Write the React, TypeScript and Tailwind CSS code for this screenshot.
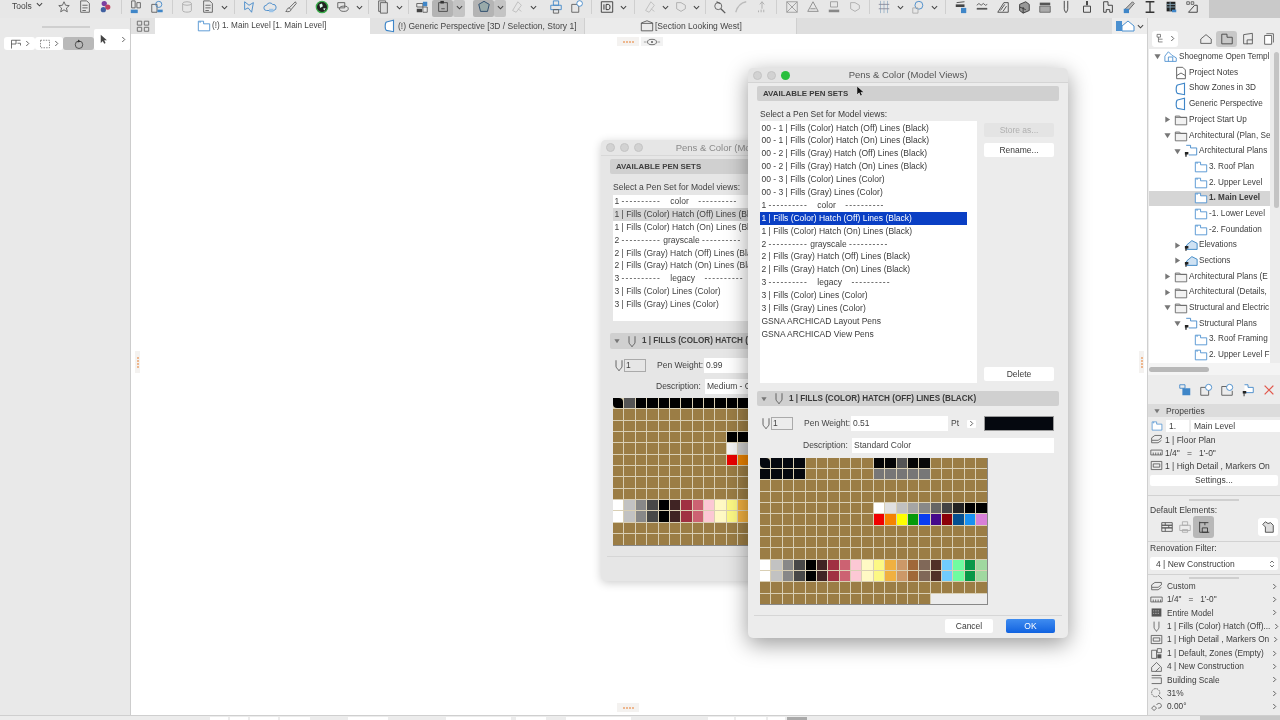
import React from "react";

const S = "#5a5a5a";
const B = "#3f86c8";

const paths: Record<string, React.ReactNode> = {
  star: <path d="M8 2l1.800 4 4.200.4-3.200 2.800 1 4.300L8 11.200l-3.800 2.300 1-4.300L2 6.400 6.200 6z" fill="none" stroke={S} />,
  doc: <><path d="M3 1h7l3 3v10H3z" fill="none" stroke={S} /><path d="M5 6h6M5 9h6M5 12h4" stroke={S} /></>,
  multi: <><circle cx="6" cy="4" r="3" fill="#7b3fa0" /><circle cx="10" cy="8" r="3" fill="#c04060" /><circle cx="5" cy="11" r="3" fill="#4060a0" /></>,
  layers: <><path d="M3 1h4v8H3zM9 3h4v6H9z" fill="none" stroke={S} /><path d="M2 11h8v4H2z" fill={B} /></>,
  plus: <><path d="M2 5h6v9H2z" fill="none" stroke={S} /><circle cx="10" cy="5" r="3.500" fill="none" stroke={B} /><path d="M8.500 11h6v3h-6z" fill={B} /></>,
  cyl: <><ellipse cx="8" cy="4" rx="5" ry="2" fill="none" stroke="#aaa" /><path d="M3 4v8c0 2.500 10 2.500 10 0V4" fill="none" stroke="#aaa" /></>,
  wand: <><path d="M3 2l5 4 5-3-2 11-4-5-4 2z" fill="none" stroke={B} /></>,
  cloud: <><path d="M4 12a3 3 0 010-6 4 4 0 017-1 3.500 3.500 0 011 7z" fill="none" stroke={B} /><path d="M7 10h5v4H7z" fill="#9cc4e8" /></>,
  brush: <><path d="M13 2L6 9l2 2 6-7zM6 9c-3 0-2 3-4 4 3 1 6 0 6-2" fill="none" stroke={S} /></>,
  globe: <><circle cx="8" cy="8" r="6.500" fill="#222" stroke="#3cae4c" strokeWidth="1.500" /><path d="M5 5l3-1 1 3-3 2zM9 10l3-1-1 3z" fill="#dfe" /></>,
  chain: <><path d="M2 3h8v6H2z" fill="none" stroke={S} /><ellipse cx="9" cy="10" rx="5" ry="3" fill="none" stroke={S} /></>,
  pages: <><path d="M3 1h8v12H3z" fill="#e8e8e8" stroke={S} /><path d="M5 3h8v12H5z" fill="#ddd" stroke={S} /></>,
  iso: <><path d="M2 4h7v4H2zM9 8h5v6H9z" fill="none" stroke={S} /><path d="M9 2h5v5H9z" fill={B} /><path d="M2 10h6v4H2z" fill="#444" /></>,
  sq: <><path d="M3 3h10v10H3z" fill="none" stroke="#444" /><path d="M5 1h4v3H5z" fill="#333" /><path d="M6 10h4" stroke="#444" /></>,
  hexa: <path d="M8 1.500l6 3.500-2 8H4L2 5z" fill="#9aa" stroke="#246" strokeWidth="1" />,
  ghost: <path d="M3 12l6-10 4 4-6 8zM9 10l4 3" fill="none" stroke="#bbb" />,
  printer: <><path d="M5 1h6v5H5zM2 6h12v5H2z" fill="none" stroke={B} /><path d="M5 11h6v4H5z" fill="none" stroke={S} /></>,
  addpage: <><path d="M2 5h8v9H2z" fill="none" stroke={S} /><circle cx="11" cy="4" r="3.200" fill="#fff" stroke={B} /></>,
  id: <><path d="M1.500 2h13v12h-13z" fill="none" stroke="#333" /><path d="M4.500 5v6M7 5v6h2.500a2 3 0 000-6z" fill="none" stroke="#222" /></>,
  pickup: <><circle cx="6" cy="7" r="4" fill="none" stroke={S} /><path d="M9 10l5 5M4 2l4 2" stroke={S} strokeWidth="1.500" /></>,
  curve: <path d="M2 14C4 7 8 3 14 2" fill="none" stroke="#bbb" strokeWidth="1.500" />,
  arrowup: <><path d="M8 2v8M5.500 5L8 2l2.500 3" fill="none" stroke="#aaa" /><path d="M4 14v-2M7 14v-3M10 14v-3" stroke="#aaa" /></>,
  cross: <><path d="M2 2h12v12H2zM2 2l12 12M14 2L2 14" fill="none" stroke="#999" /></>,
  tri: <path d="M8 2l6 11H2zM5 10h6" fill="none" stroke="#888" />,
  roll: <><path d="M4 2h8v6H4z" fill="none" stroke="#999" /><path d="M2 11h12v3H2z" fill="#888" /></>,
  shape: <path d="M3 3h5l5 3v4l-5 3-5-3z" fill="none" stroke="#aaa" />,
  column: <><path d="M4 1v14M8 1v14M12 1v14" stroke="#9cb4c8" /><path d="M2 5h12M2 10h12" stroke="#889" /></>,
  circleplus: <><circle cx="9" cy="6" r="4.500" fill="none" stroke={B} /><path d="M2 9h6v6H2z" fill="none" stroke="#aaa" /></>,
  roof: <><path d="M2 5h10v3H2z" fill="#444" /><path d="M3 3l9-1" stroke="#444" /><path d="M8 9h6v6H8z" fill={B} /></>,
  wave: <><path d="M2 6l2.500-2L7 6l2.500-2L12 6l2-1" fill="none" stroke="#555" /><path d="M2 10h12" stroke="#555" strokeWidth="2" /></>,
  hatch: <path d="M2 14L9 3h5v11zM5 12l5-7M8 13l4-6" fill="none" stroke="#444" />,
  cube: <><path d="M3 5l7-3 4 3v7l-7 3-4-3z" fill="#999" stroke="#333" /><path d="M3 8l7 3M7 8v7" stroke="#333" /></>,
  slab: <><path d="M2 3h12v3H2z" fill="#555" /><path d="M2 7h12v7H2z" fill="#aaa" stroke="#666" /></>,
  pen: <path d="M6 1v9c0 1.500 1 3.500 2 4.500 1-1 2-3 2-4.500V1" fill="none" stroke="#333" />,
  bottle: <><path d="M7 1h2v5H7z" fill="#333" /><path d="M4 7h8v7H4z" fill="none" stroke="#333" /></>,
  plan2: <path d="M3 2h5v4h5v8h-3v-3H6v3H3z" fill="none" stroke="#333" />,
  brushB: <><path d="M4 10l8-8 2 2-7 8z" fill="#bbb" stroke={S} /><path d="M2 10h6v5H2z" fill={B} /></>,
  ibeam: <path d="M3 2h10M3 14h10M8 2v12" fill="none" stroke="#333" strokeWidth="1.500" />,
  book: <><path d="M3 2h10v11H3z" fill="#222" /><path d="M3 5h10M3 8h10M7 2v11" stroke="#8ab" /><path d="M9 11h5v3H9z" fill={B} /></>,
  tool: <><path d="M2 2h3v3H2zM7 2h3v3H7z" fill="none" stroke={S} /><path d="M4 14L11 6h3v8z" fill="none" stroke="#333" /></>,
};

const Ic = ({ n, className = "w-[14px] h-[14px]" }: { n: string; className?: string }) => (
  <svg viewBox="0 0 16 16" className={className}>{paths[n]}</svg>
);

const Chev = () => (
  <svg viewBox="0 0 8 8" className="w-[7px] h-[7px]"><path d="M1 2.500l3 3 3-3" fill="none" stroke="#444" strokeWidth="1.200" /></svg>
);

type T = [string, string, string?];
const I = "w-[21px]";
const C = "w-[12px]";
const tb: T[] = [
  ["star", I], ["doc", I], ["multi", I], ["|", "w-[9px]"],
  ["layers", I], ["plus", I], ["|", "w-[9px]"],
  ["cyl", I], ["doc", I], ["v", C], ["|", "w-[7.500px]"],
  ["wand", I], ["cloud", I], ["brush", I], ["|", "w-[10px]"],
  ["globe", I], ["chain", I], ["v", C], ["|", "w-[7px]"],
  ["pages", I], ["v", C], ["|", "w-[6px]"],
  ["iso", I], ["sq", I, "bg-[#b4b4b4] rounded-[2px]"], ["v", C, "bg-[#c4c4c4] rounded-[2px]"], [" ", "w-[8px]"],
  ["hexa", I, "bg-[#b4b4b4] rounded-[2px]"], ["v", C, "bg-[#c4c4c4] rounded-[2px]"],
  ["ghost", I], ["v", C], [" ", "w-[6px]"],
  ["printer", I], ["addpage", I], ["|", "w-[9px]"],
  ["id", I], ["v", C], ["|", "w-[10px]"],
  ["ghost", I], ["v", "w-[10px]"], ["shape", I], ["v", "w-[10px]"], ["|", "w-[8px]"],
  ["pickup", I], ["curve", I], ["arrowup", I], ["|", "w-[9px]"],
  ["cross", I], ["tri", I], ["roll", I], ["shape", I], ["|", "w-[8px]"],
  ["column", I], ["v", C], [" ", "w-[1px]"], ["circleplus", I], ["v", C], ["|", "w-[10px]"],
  ["roof", I], ["wave", I], ["hatch", I], ["cube", I], ["slab", I], ["pen", I], ["bottle", I], ["plan2", I], ["brushB", I], ["ibeam", I], ["book", I], ["tool", I],
];

const Toolbar = () => (
  <div className="h-[18px] bg-[#e7e7e7] flex overflow-hidden shrink-0">
    <div className="w-[53.500px] flex items-start gap-[4px] pl-[12px] pt-[1px] text-[8.500px] text-[#444] leading-[10px]">Tools <Chev /></div>
    {tb.map(([n, w, extra], i) => (
      <div key={i} className={`${w} ${extra ?? ""} h-[17px] flex items-center justify-center shrink-0 pb-[3px]`}>
        {n === "|" ? <div className="w-px h-[14px] bg-[#cfcfcf]" /> : n === " " ? null : n === "v" ? <Chev /> : <Ic n={n} />}
      </div>
    ))}
    <div className="flex-1 ml-[7px] bg-[#c9c9c9]" />
  </div>
);

const PlanIc = ({ className = "w-[14px] h-[14px]" }: { className?: string }) => (
  <svg viewBox="0 0 16 16" className={className}><path d="M1.500 2.500v11h13V5.500H7.500v-3z" fill="#fff" stroke="#4b90d0" /><path d="M3.500 2.500v2" stroke="#4b90d0" /></svg>
);
const PerspIc = ({ className = "w-[14px] h-[14px]" }: { className?: string }) => (
  <svg viewBox="0 0 16 16" className={className}><path d="M4 3.500l8-2v13l-8-1.500c-2-1-2-8.500 0-9.500z" fill="#fff" stroke="#3f86c8" strokeWidth="1.300" /></svg>
);
const SectIc = ({ className = "w-[14px] h-[14px]" }: { className?: string }) => (
  <svg viewBox="0 0 16 16" className={className}><path d="M1.500 13.500v-9L8 2l6.500 2.500v9z" fill="none" stroke="#555" /><path d="M1.500 5h13" stroke="#555" /></svg>
);
const Folder = () => (
  <svg viewBox="0 0 16 16" className="w-[14px] h-[14px]"><path d="M1.500 3.500h5l1 1.500h7v8.500h-13z" fill="#f2f2f2" stroke="#666" /><path d="M1.500 5h13" stroke="#666" /></svg>
);
const Note = () => (
  <svg viewBox="0 0 16 16" className="w-[14px] h-[14px]"><path d="M3 1.500h7l3 3v10H3z" fill="#fff" stroke="#555" /><path d="M3 11l5-3 5 3" fill="none" stroke="#555" /></svg>
);
const Pinned = ({ round }: { round?: boolean }) => (
  <svg viewBox="0 0 16 16" className="w-[14px] h-[14px]">
    {round ? <path d="M3 8l6-5 6 3v7H3z" fill="#cfe2f3" stroke="#2f7fc0" /> : <path d="M2.500 1.500h5v3h7v8h-9" fill="#fff" stroke="#3f86c8" />}
    <path d="M1 9h4v3H3v2.500H1.500V12H1z" fill="#222" />
  </svg>
);
const SectRoot = () => (
  <svg viewBox="0 0 16 16" className="w-[14px] h-[14px]"><path d="M1 13V7l4-5 4 4 5 3v4z" fill="#fff" stroke="#4b90d0" /><path d="M5 13V8h5v5" fill="none" stroke="#4b90d0" /></svg>
);

type Row = { l: number; t?: "r" | "d"; i: string; x: string; sel?: boolean };
const rows: Row[] = [
  { l: 0, t: "d", i: "root", x: "Shoegnome Open Templ" },
  { l: 1, i: "note", x: "Project Notes" },
  { l: 1, i: "persp", x: "Show Zones in 3D" },
  { l: 1, i: "persp", x: "Generic Perspective" },
  { l: 1, t: "r", i: "folder", x: "Project Start Up" },
  { l: 1, t: "d", i: "folder", x: "Architectural (Plan, Se" },
  { l: 2, t: "d", i: "pin", x: "Architectural Plans" },
  { l: 3, i: "plan", x: "3. Roof Plan" },
  { l: 3, i: "plan", x: "2. Upper Level" },
  { l: 3, i: "plan", x: "1. Main Level", sel: true },
  { l: 3, i: "plan", x: "-1. Lower Level" },
  { l: 3, i: "plan", x: "-2. Foundation" },
  { l: 2, t: "r", i: "pinr", x: "Elevations" },
  { l: 2, t: "r", i: "pinr", x: "Sections" },
  { l: 1, t: "r", i: "folder", x: "Architectural Plans (E" },
  { l: 1, t: "r", i: "folder", x: "Architectural (Details," },
  { l: 1, t: "d", i: "folder", x: "Structural and Electric" },
  { l: 2, t: "d", i: "pin", x: "Structural Plans" },
  { l: 3, i: "plan", x: "3. Roof Framing" },
  { l: 3, i: "plan", x: "2. Upper Level F" },
];

const Tri = ({ d, className = "w-[7px] h-[7px]" }: { d: "r" | "d"; className?: string }) => (
  <svg viewBox="0 0 8 8" className={className}>{d === "r" ? <path d="M1.500 0.500L7 4 1.500 7.500z" fill="#777" /> : <path d="M0.500 1.500h7L4 7z" fill="#777" />}</svg>
);

const pad = ["w-[12px]", "w-[22px]", "w-[32px]", "w-[42px]"];
const TreeRow = ({ r }: { r: Row }) => (
  <div className={`h-[15.700px] flex items-center relative whitespace-nowrap overflow-hidden ${r.sel ? "bg-[#d5d5d5] font-bold" : ""}`}>
    <div className={`${pad[r.l]} shrink-0 relative h-full`}>
      {r.t && <div className="absolute right-[0px] top-[4px]"><Tri d={r.t} /></div>}
    </div>
    <div className="w-[16px] shrink-0 pl-[1px] flex items-center ml-[2px]">
      {r.i === "root" ? <SectRoot /> : r.i === "note" ? <Note /> : r.i === "persp" ? <PerspIc /> : r.i === "folder" ? <Folder /> : r.i === "plan" ? <PlanIc /> : r.i === "pin" ? <Pinned /> : <Pinned round />}
    </div>
    <span>{r.x}</span>
  </div>
);

const propRows: [string, string][] = [
  ["floors", "Custom"], ["scale", '1/4"   =   1\'-0"'], ["model", "Entire Model"], ["pen", "1 | Fills (Color) Hatch (Off)..."],
  ["det", "1 | High Detail , Markers On"], ["zone", "1 | Default, Zones (Empty)"], ["reno", "4 | New Construction"], ["bld", "Building Scale"], ["zoom", "31%"], ["rot", "0.00°"],
];
const SmIc = ({ n }: { n: string }) => {
  const m: Record<string, React.ReactNode> = {
    floors: <><path d="M2 6l4-3h8v3l-4 3H2z" fill="none" stroke="#555" /><path d="M2 9v3h8l4-3" fill="none" stroke="#555" /></>,
    scale: <><path d="M1 5h14v6H1z" fill="none" stroke="#555" /><path d="M4 8v3M7 8v3M10 8v3M13 8v3" stroke="#555" /></>,
    model: <><path d="M2 3h12v10H2z" fill="#555" /><path d="M4 6h8M4 9h8" stroke="#ddd" strokeDasharray="1 1" /></>,
    pen: <path d="M5 2v7c0 2 2 3 3 5 1-2 3-3 3-5V2" fill="none" stroke="#555" />,
    det: <><path d="M1.500 3h13v10h-13z" fill="none" stroke="#555" /><path d="M4 6h8v4H4z" fill="none" stroke="#555" /></>,
    zone: <><path d="M2 4h6v10H2zM9 2h5v5H9z" fill="none" stroke="#555" /><path d="M9 9h5v5H9z" fill="#555" /></>,
    reno: <path d="M2 14V9l6-6 6 6v5zM7 14l5-5" fill="none" stroke="#555" />,
    bld: <><path d="M2 3h12M2 13h12M2 6h12v7" fill="none" stroke="#555" /></>,
    zoom: <><circle cx="7" cy="7" r="5" fill="none" stroke="#555" strokeDasharray="2 1" /><path d="M10.500 10.500L15 15" stroke="#555" /></>,
    rot: <path d="M2 10l3-3 3 3-3 3zM8 6c2-3 6-2 6 1s-3 3-4 3" fill="none" stroke="#555" />,
  };
  return <svg viewBox="0 0 16 16" className="w-[13px] h-[13px] shrink-0">{m[n]}</svg>;
};
const Gt = () => (
  <svg viewBox="0 0 6 8" className="w-[5px] h-[7px] shrink-0"><path d="M1.500 1l3 3-3 3" fill="none" stroke="#444" /></svg>
);

const RightPanel = () => (
  <div className="w-[133px] shrink-0 bg-[#ececec] border-l border-[#cfcfcf] flex flex-col text-[#3c3c3c] text-[8.500px] relative overflow-hidden [&>*]:shrink-0">
    <div className="h-[31.400px] relative flex items-center">
      <div className="w-[26px] h-[16px] ml-[4px] mt-[10px] bg-white rounded-[3px] flex items-center justify-center gap-[4px]">
        <svg viewBox="0 0 16 16" className="w-[11px] h-[11px]"><path d="M3 2h5v4H3zM5 6v7h6M5 9h6" fill="none" stroke="#555" /></svg><Gt />
      </div>
      <div className="flex items-center ml-[17px] mt-[10px]">
        <div className="w-[21px] h-[16px] flex items-center justify-center"><svg viewBox="0 0 16 16" className="w-[14px] h-[14px]"><path d="M2 13V8l6-5 6 5v5z" fill="none" stroke="#555" /></svg></div>
        <div className="w-[21px] h-[16px] flex items-center justify-center bg-[#c8c8c8] rounded-[3px]"><svg viewBox="0 0 16 16" className="w-[14px] h-[14px]"><path d="M2 2.500v11h12V6H8V2.500z" fill="none" stroke="#444" /></svg></div>
        <div className="w-[21px] h-[16px] flex items-center justify-center"><svg viewBox="0 0 16 16" className="w-[14px] h-[14px]"><path d="M3 3l10-1.500v12H3z" fill="none" stroke="#555" /><path d="M7 14V9h6" fill="none" stroke="#555" /></svg></div>
        <div className="w-[21px] h-[16px] flex items-center justify-center"><svg viewBox="0 0 16 16" className="w-[14px] h-[14px]"><path d="M5 2h8v10M3 4h8v10H3z" fill="#fff" stroke="#555" /></svg></div>
      </div>
    </div>
    <div className="h-[314px] bg-white overflow-hidden ml-[1px] mr-[10px] text-[8.200px]">
      {rows.map((r, i) => <TreeRow key={i} r={r} />)}
    </div>
    <div className="absolute right-[1px] top-[34px] w-[5px] h-[156px] rounded-full bg-[#c4c4c4]" />
    <div className="h-[12px] flex items-center px-[1px] bg-[#f4f4f4]"><div className="w-[60px] h-[5px] rounded-full bg-[#b8b8b8]" /></div>
    <div className="h-[29px] flex items-center justify-end gap-[7px] pr-[4px]">
      <svg viewBox="0 0 16 16" className="w-[14px] h-[14px]"><path d="M2 2h6v4H2z" fill="none" stroke={B} /><path d="M5 6h9v8H5z" fill={B} /></svg>
      <svg viewBox="0 0 16 16" className="w-[14px] h-[14px]"><path d="M2 5h9v9H2z" fill="none" stroke="#555" /><circle cx="11" cy="5" r="3.500" fill="#fff" stroke={B} /></svg>
      <svg viewBox="0 0 16 16" className="w-[14px] h-[14px]"><path d="M2 4h6M2 4v10h12V9" fill="none" stroke="#555" /><circle cx="11" cy="5" r="3.500" fill="#fff" stroke={B} /></svg>
      <svg viewBox="0 0 16 16" className="w-[14px] h-[14px]"><path d="M4 2h4v3h6v6H4" fill="#fff" stroke={B} /><path d="M2 9h4v3H4v3H3v-3H2z" fill="#222" /></svg>
      <svg viewBox="0 0 16 16" className="w-[14px] h-[14px]"><path d="M3 3l10 10M13 3L3 13" stroke="#e2584c" strokeWidth="1.500" /></svg>
    </div>
    <div className="h-[13px] bg-[#dcdcdc] flex items-center pl-[6px] gap-[6px]"><Tri d="d" className="w-[6px] h-[6px]" /><span>Properties</span></div>
    <div className="h-[15px] mt-[1px] flex items-center pl-[3px] gap-[1px]">
      <PlanIc className="w-[12px] h-[12px] mr-[2px]" />
      <div className="w-[23px] h-[12px] bg-white pl-[3px] leading-[12px]">1.</div>
      <div className="flex-1 h-[12px] bg-white pl-[3px] ml-[1px] leading-[12px]">Main Level</div>
    </div>
    {[["floors", "1 | Floor Plan"], ["scale", '1/4"   =   1\'-0"'], ["det", "1 | High Detail , Markers On"]].map(([n, t]) => (
      <div key={t} className="h-[13px] flex items-center pl-[2px] gap-[2px] whitespace-pre"><SmIc n={n} /><span>{t}</span></div>
    ))}
    <div className="h-[11px] mx-[2px] mt-[3px] bg-white rounded-[2px] text-center leading-[11px]">Settings...</div>
    <div className="h-px bg-[#d2d2d2] mt-[9px]" />
    <div className="h-[2px] w-[50px] bg-[#cfcfcf] self-center mt-[3px]" />
    <div className="h-[12px] pl-[2px] mt-[3px] leading-[12px]">Default Elements:</div>
    <div className="h-[22px] flex items-center pl-[8px]">
      <div className="w-[21px] flex justify-center"><svg viewBox="0 0 16 16" className="w-[14px] h-[14px]"><path d="M2 3h12v3H2zM2 6h12v3H2zM2 9h12v4H2zM6 3v3M10 6v3M6 9v4" fill="none" stroke="#555" /></svg></div>
      <div className="w-[16px] flex justify-center"><svg viewBox="0 0 16 16" className="w-[14px] h-[14px]"><path d="M5 2h6v4H5zM2 6h12v6H2zM5 11h6v3H5z" fill="none" stroke="#aaa" /></svg></div>
      <div className="w-[21px] h-[22px] bg-[#b8b8b8] rounded-[3px] flex items-center justify-center"><svg viewBox="0 0 16 16" className="w-[14px] h-[14px]"><path d="M3 2v12M3 3h10M3 14h11M9 3v3M6 9h6v5H6z" fill="none" stroke="#333" /></svg></div>
      <div className="w-[20px] h-[18px] ml-[44px] bg-white rounded-[3px] flex items-center justify-center"><svg viewBox="0 0 16 16" className="w-[14px] h-[14px]"><path d="M2 5l3-3 3 2 3-1 3 3v8H5V8z" fill="#ddd" stroke="#444" /></svg></div>
    </div>
    <div className="h-px bg-[#d2d2d2] mt-[3px]" />
    <div className="h-[12px] pl-[2px] leading-[12px]">Renovation Filter:</div>
    <div className="h-[13px] mx-[2px] mt-[3px] bg-white rounded-[2px] flex items-center justify-between pl-[6px] pr-[3px]"><span>4 | New Construction</span><svg viewBox="0 0 8 12" className="w-[6px] h-[10px]"><path d="M1.500 4.500L4 2l2.500 2.500M1.500 7.500L4 10l2.500-2.500" fill="none" stroke="#444" /></svg></div>
    <div className="h-px bg-[#d2d2d2] mt-[4px]" />
    <div className="h-[2px] w-[50px] bg-[#cfcfcf] self-center mt-[2px]" />
    <div className="text-[8.300px]">
      {propRows.map(([n, t]) => (
        <div key={n} className="h-[13.400px] flex items-center pl-[2px] pr-[3px] gap-[4px] whitespace-pre"><SmIc n={n} /><span className="flex-1">{t}</span><Gt /></div>
      ))}
    </div>
  </div>
);

const BROWN = "#9b7d45";
const base = (over: Record<number, string>, blank: number | null) => {
  const out: { c: string; span?: boolean }[] = [];
  for (let i = 0; i < 260; i++) {
    if (blank !== null && i === blank) { out.push({ c: "#ececec", span: true }); break; }
    out.push({ c: over[i] ?? BROWN });
  }
  return out;
};
const addRow = (o: Record<number, string>, row: number, start: number, cols: string[]) => cols.forEach((c, i) => { o[row * 20 + start + i] = c; });
const ramp = ["#ffffff", "#c2c2c2", "#888888", "#484848", "#000000", "#402424", "#a03042", "#cc6272", "#fcc8d4", "#fff9c4", "#fcf884", "#f0b040", "#cc9868", "#a06838", "#806858", "#503028", "#70ccfc", "#70fca0", "#089848", "#a0d8a0"];
const front: Record<number, string> = {};
addRow(front, 0, 0, ["#05080f", "#05080f", "#05080f", "#05080f"]);
addRow(front, 1, 0, ["#05080f", "#05080f", "#05080f", "#05080f"]);
addRow(front, 0, 10, ["#050505", "#050505", "#555555", "#050505", "#0a0a0a"]);
addRow(front, 1, 10, ["#777777", "#777777", "#777777", "#777777", "#777777"]);
addRow(front, 4, 10, ["#ffffff", "#e0e0e0", "#c0c0c0", "#a5a5a5", "#888888", "#666666", "#444444", "#222222", "#000000", "#000000"]);
addRow(front, 5, 10, ["#f00000", "#f58300", "#ffff00", "#069a0a", "#0a3cf0", "#460a8c", "#8c0008", "#054f90", "#1890f0", "#d880d8"]);
addRow(front, 9, 0, ramp);
addRow(front, 10, 0, ramp);
const back: Record<number, string> = {};
addRow(back, 0, 0, ["#000000", "#555555", ...Array(18).fill("#000000")]);
addRow(back, 3, 10, ["#000000", "#000000"]);
addRow(back, 4, 10, ["#f4f4f4", "#cccccc"]);
addRow(back, 5, 10, ["#e80000", "#e88000"]);
addRow(back, 9, 0, ramp);
addRow(back, 10, 0, ramp);

const Palette = ({ over, blank }: { over: Record<number, string>; blank: number | null }) => (
  <div className="w-[227.500px] h-[147.500px] bg-[#d9cfb4] grid grid-cols-[repeat(20,1fr)] grid-rows-[repeat(13,1fr)] gap-[1px] border-b border-r border-[#888] shrink-0">
    {base(over, blank).map((c, i) => (
      <div key={i} className={c.span ? "col-span-5" : i === 0 ? "rounded-tr-[4px] rounded-bl-[4px]" : ""} style={{ backgroundColor: c.c }} />
    ))}
  </div>
);

const Lights = ({ green }: { green?: boolean }) => (
  <div className="flex gap-[5px] items-center absolute left-[5px] top-[2px] h-[11px]">
    <div className="w-[9px] h-[9px] rounded-full bg-[#d2d2d2] border border-[#c4c4c4]" />
    <div className="w-[9px] h-[9px] rounded-full bg-[#d2d2d2] border border-[#c4c4c4]" />
    <div className={`w-[9px] h-[9px] rounded-full ${green ? "bg-[#2abf3e]" : "bg-[#d2d2d2] border border-[#c4c4c4]"}`} />
  </div>
);

const Fork = () => <svg viewBox="0 0 16 16" className="w-[12px] h-[13px] shrink-0"><path d="M4 1v8c0 2 2 3 4 6 2-3 4-4 4-6V1" fill="none" stroke="#555" strokeWidth="1.200" /></svg>;

const Dashed = ({ t }: { t: string }) => (
  <>{t.split(/(-{10})/).map((p, i) => (p.startsWith("-----") ? <span key={i} className="tracking-[1.100px]">{p}</span> : <span key={i}>{p}</span>))}</>
);

const frontList = ["00 - 1 | Fills (Color) Hatch (Off) Lines (Black)", "00 - 1 | Fills (Color) Hatch (On) Lines (Black)", "00 - 2 | Fills (Gray) Hatch (Off) Lines (Black)", "00 - 2 | Fills (Gray) Hatch (On) Lines (Black)", "00 - 3 | Fills (Color) Lines (Color)", "00 - 3 | Fills (Gray) Lines (Color)", "1 ----------    color    ----------", "1 | Fills (Color) Hatch (Off) Lines (Black)", "1 | Fills (Color) Hatch (On) Lines (Black)", "2 ---------- grayscale ----------", "2 | Fills (Gray) Hatch (Off) Lines (Black)", "2 | Fills (Gray) Hatch (On) Lines (Black)", "3 ----------    legacy    ----------", "3 | Fills (Color) Lines (Color)", "3 | Fills (Gray) Lines (Color)", "GSNA ARCHICAD Layout Pens", "GSNA ARCHICAD View Pens"];
const backList = ["1 ----------    color    ----------", "1 | Fills (Color) Hatch (Off) Lines (Black)", "1 | Fills (Color) Hatch (On) Lines (Black)", "2 ---------- grayscale ----------", "2 | Fills (Gray) Hatch (Off) Lines (Black)", "2 | Fills (Gray) Hatch (On) Lines (Black)", "3 ----------    legacy    ----------", "3 | Fills (Color) Lines (Color)", "3 | Fills (Gray) Lines (Color)"];

const FrontWindow = () => (
  <div className="absolute left-[748px] top-[68px] w-[320px] h-[570px] bg-[#ececec] rounded-[5px] shadow-[0_6px_22px_rgba(0,0,0,0.4)] flex flex-col text-[#3a3a3a] text-[8.500px] overflow-hidden">
    <div className="h-[15px] relative text-center text-[9.500px] text-[#555] leading-[14px] bg-[#e4e4e4] border-b border-[#d4d4d4]"><Lights green />Pens &amp; Color (Model Views)</div>
    <div className="h-[15px] mt-[3px] mx-[9px] bg-[#d0d0d0] rounded-[2px] pl-[6px] font-bold text-[7.900px] leading-[15px]">AVAILABLE PEN SETS</div>
    <div className="h-[10px] mt-[8px] ml-[12px] leading-[10px]">Select a Pen Set for Model views:</div>
    <div className="flex mt-[2px] ml-[12px] h-[262px]">
      <div className="w-[217px] bg-white pt-[0.500px]">
        {frontList.map((t, i) => (
          <div key={i} className={`h-[12.900px] w-[207px] leading-[12.900px] pl-[1.500px] whitespace-pre ${i === 7 ? "bg-[#0a3fc4] text-white" : ""}`}><Dashed t={t} /></div>
        ))}
      </div>
      <div className="flex flex-col ml-[7px] w-[70px] text-center">
        <div className="h-[14px] mt-[2px] bg-[#e4e4e4] text-[#b0b0b0] rounded-[2px] leading-[14px]">Store as...</div>
        <div className="h-[14px] mt-[6px] bg-white rounded-[2px] leading-[14px]">Rename...</div>
        <div className="h-[14px] mt-auto mb-[2px] bg-white rounded-[2px] leading-[14px]">Delete</div>
      </div>
    </div>
    <div className="h-[15px] mt-[8px] mx-[9px] bg-[#d0d0d0] rounded-[2px] pl-[4px] flex items-center gap-[6px] font-bold text-[8.150px] leading-[15px]"><Tri d="d" className="w-[6px] h-[6px]" /><Fork /><span className="ml-[-2px]">1 | FILLS (COLOR) HATCH (OFF) LINES (BLACK)</span></div>
    <div className="h-[15px] mt-[10px] flex items-center pl-[12px] text-[#444] whitespace-nowrap">
      <Fork />
      <div className="w-[22px] h-[13px] border border-[#aaa] ml-[-1px] pl-[1px] leading-[11px]">1</div>
      <span className="ml-[11px] w-[47px]">Pen Weight:</span>
      <div className="w-[97px] h-[15px] bg-white pl-[2px] leading-[15px]">0.51</div>
      <span className="ml-[3px] w-[13px]">Pt</span>
      <div className="w-[9px] h-[8px] ml-[3px] bg-white rounded-[1px] flex items-center justify-center"><Gt /></div>
      <div className="w-[70px] h-[15px] ml-[8px] bg-[#05080f] border border-[#9a9a9a]" />
    </div>
    <div className="h-[15px] mt-[7px] flex items-center pl-[55px] text-[#444] whitespace-nowrap">
      <span className="w-[49px]">Description:</span>
      <div className="w-[202px] h-[15px] bg-white pl-[2px] leading-[15px]">Standard Color</div>
    </div>
    <div className="ml-[12px] mt-[4.500px]"><Palette over={front} blank={255} /></div>
    <div className="h-px mx-[6px] mt-[10px] bg-[#d6d6d6]" />
    <div className="flex justify-end pr-[13px] mt-[3px] gap-[13px] text-center">
      <div className="w-[48px] h-[14px] bg-white rounded-[2px] leading-[14px]">Cancel</div>
      <div className="w-[49px] h-[14px] bg-gradient-to-b from-[#3f8cf0] to-[#0f62e0] text-white rounded-[2px] leading-[14px]">OK</div>
    </div>
  </div>
);

const BackWindow = () => (
  <div className="absolute left-[601px] top-[140px] w-[268px] h-[441px] bg-[#e6e6e6] rounded-[5px] shadow-[0_2px_10px_rgba(0,0,0,0.2)] flex flex-col text-[#3f3f3f] text-[8.500px] overflow-hidden">
    <div className="h-[16px] relative text-center text-[9.500px] text-[#8a8a8a] leading-[15px] bg-[#e6e6e6] border-b border-[#d8d8d8]"><Lights />Pens &amp; Color (Model Views)</div>
    <div className="h-[15px] mt-[3px] mx-[9px] bg-[#d0d0d0] rounded-[2px] pl-[6px] font-bold text-[7.900px] leading-[15px]">AVAILABLE PEN SETS</div>
    <div className="h-[10px] mt-[8px] ml-[12px] leading-[10px]">Select a Pen Set for Model views:</div>
    <div className="mt-[3px] ml-[12px] w-[217px] h-[126px] bg-white shrink-0">
      {backList.map((t, i) => (
        <div key={i} className={`h-[12.900px] leading-[12.900px] pl-[1.500px] whitespace-pre ${i === 1 ? "bg-[#d6d6d6]" : ""}`}><Dashed t={t} /></div>
      ))}
    </div>
    <div className="h-[16px] mt-[12px] mx-[9px] bg-[#d0d0d0] rounded-[2px] pl-[4px] flex items-center gap-[6px] font-bold text-[8.150px] whitespace-nowrap overflow-hidden"><Tri d="d" className="w-[6px] h-[6px]" /><Fork /><span className="ml-[-2px]">1 | FILLS (COLOR) HATCH (OFF) LINES (BLACK)</span></div>
    <div className="h-[15px] mt-[9px] flex items-center pl-[12px] whitespace-nowrap">
      <Fork />
      <div className="w-[22px] h-[13px] border border-[#aaa] ml-[-1px] pl-[1px] leading-[11px]">1</div>
      <span className="ml-[11px] w-[47px]">Pen Weight:</span>
      <div className="w-[97px] h-[15px] bg-white pl-[2px] leading-[15px]">0.99</div>
    </div>
    <div className="h-[15px] mt-[6px] flex items-center pl-[55px] whitespace-nowrap">
      <span className="w-[49px]">Description:</span>
      <div className="w-[150px] h-[15px] bg-white pl-[2px] leading-[15px]">Medium - Color</div>
    </div>
    <div className="ml-[12px] mt-[4px]"><Palette over={back} blank={null} /></div>
    <div className="h-px mx-[6px] mt-[10px] bg-[#d6d6d6]" />
  </div>
);

const Grip = ({ v }: { v?: boolean }) => (
  <div className={`${v ? "w-[5px] h-[22px] flex-col" : "w-[22px] h-[9px]"} bg-[#f4f2f0] flex items-center justify-center gap-[1px]`}>
    {[0, 1, 2, 3].map((i) => <div key={i} className="w-[2px] h-[2px] bg-[#eeb78e]" />)}
  </div>
);

const Tab = ({ cls, icon, text }: { cls: string; icon: React.ReactNode; text: string }) => (
  <div className={`${cls} h-full flex items-center text-[#444] whitespace-nowrap`}>{icon}<span className="ml-[1px]">{text}</span></div>
);

const App = () => (
  <div className="relative w-[1280px] h-[720px] overflow-hidden bg-white flex flex-col font-['Liberation_Sans',sans-serif] blur-[0.35px]">
    <Toolbar />
    <div className="flex flex-1 min-h-0">
      <div className="w-[131px] shrink-0 bg-[#e9e9e9] border-r border-[#cdcdcd] relative">
        <div className="h-[2px] w-[48px] bg-[#cfcfcf] mt-[8px] ml-[42px]" />
        <div className="flex items-end mt-[1px] ml-[4px] h-[21px]">
          <div className="w-[31px] h-[13px] bg-white rounded-[3px] flex items-center justify-center gap-[3px]"><svg viewBox="0 0 16 16" className="w-[12px] h-[12px]"><path d="M2 14V3h12M2 8h6V3M10 7h4v3" fill="none" stroke="#444" /></svg><Gt /></div>
          <div className="w-[28px] h-[13px] bg-white rounded-[3px] flex items-center justify-center gap-[3px]"><svg viewBox="0 0 16 16" className="w-[12px] h-[12px]"><path d="M2 3h12v10H2z" fill="none" stroke="#666" strokeDasharray="2 1.500" /></svg><Gt /></div>
          <div className="w-[31px] h-[13px] bg-[#b9b9b9] rounded-[3px] flex items-center justify-center"><svg viewBox="0 0 16 16" className="w-[12px] h-[12px]"><circle cx="8" cy="9" r="5" fill="none" stroke="#333" /><path d="M7 2l3 3-4 1z" fill="#333" /></svg></div>
          <div className="w-[36px] h-[21px] bg-white rounded-[2px] flex items-center justify-center gap-[12px]"><svg viewBox="0 0 16 16" className="w-[11px] h-[11px]"><path d="M4 1v12l3-3 2 4 2-1-2-4h4z" fill="#444" /></svg><Gt /></div>
        </div>
      </div>
      <div className="flex-1 flex flex-col min-w-0">
        <div className="h-[16px] flex shrink-0 items-stretch text-[8.500px]">
          <div className="w-[24px] bg-[#e2e2e2] flex items-center justify-center"><svg viewBox="0 0 16 16" className="w-[14px] h-[14px]"><path d="M1.500 2.500h5v4.500h-5zM9.500 2.500h5v4.500h-5zM1.500 9.500h5v4.500h-5zM9.500 9.500h5v4.500h-5z" fill="none" stroke="#666" /></svg></div>
          <Tab cls="w-[215px] bg-white pl-[42px] text-[8.200px]" icon={<PlanIc />} text="(!) 1. Main Level [1. Main Level]" />
          <Tab cls="w-[215px] bg-[#e2e2e2] pl-[13px] border-r border-[#d0d0d0]" icon={<PerspIc />} text="(!) Generic Perspective [3D / Selection, Story 1]" />
          <Tab cls="w-[212px] bg-[#ebebeb] pl-[55px] border-r border-[#cfcfcf]" icon={<SectIc />} text="[Section Looking West]" />
          <div className="w-[315px] bg-[#dedede]" />
          <div className="flex-1 bg-[#ededed] flex items-center justify-center gap-[2px]"><svg viewBox="0 0 20 14" className="w-[20px] h-[14px]"><path d="M1 2h6v10H1z" fill="#4b90d0" /><path d="M7 12V7l6-5 6 5v5z" fill="#fff" stroke="#4b90d0" /></svg><Chev /></div>
        </div>
        <div className="flex-1 relative bg-white">
          <div className="absolute left-[486px] top-[3px]"><Grip /></div>
          <div className="absolute left-[510px] top-[3px] w-[22px] h-[9px] bg-[#f2f2f2] flex items-center justify-center"><svg viewBox="0 0 20 8" className="w-[18px] h-[8px]"><path d="M1 4h3M16 4h3" stroke="#999" /><ellipse cx="10" cy="4" rx="5" ry="3" fill="none" stroke="#666" /><circle cx="10" cy="4" r="1.200" fill="#666" /></svg></div>
          <div className="absolute left-[486px] bottom-[3px]"><Grip /></div>
          <div className="absolute left-[4px] top-[317px]"><Grip v /></div>
          <div className="absolute right-[3px] top-[317px]"><Grip v /></div>
        </div>
      </div>
      <RightPanel />
    </div>
    <div className="h-[5px] shrink-0 bg-[#ececec] border-t border-[#cfcfcf] flex items-end pl-[210px] gap-[2px]">
      <div className="w-[18px] h-[3px] bg-white" /><div className="w-[18px] h-[3px] bg-white" /><div className="w-[28px] h-[3px] bg-white" /><div className="w-[30px] h-[3px] bg-white" />
      <div className="w-[40px] h-[3px] ml-[36px] bg-white" /><div className="w-[65px] h-[3px] ml-[56px] bg-white" /><div className="w-[30px] h-[3px] ml-[3px] bg-white" /><div className="w-[65px] h-[3px] ml-[18px] bg-white" />
      <div className="w-[26px] h-[3px] ml-[75px] bg-white" /><div className="w-[30px] h-[3px] bg-white" /><div className="w-[17px] h-[3px] bg-white" /><div className="w-[20px] h-[3px] bg-[#aaa]" />
      <div className="flex-1" /><div className="w-[80px] h-full bg-[#c8c8c8]" />
    </div>
    <BackWindow />
    <FrontWindow />
    <svg viewBox="0 0 10 14" className="absolute left-[856px] top-[85px] w-[9px] h-[13px]"><path d="M1 1v10l2.500-2.500L5 12l2-1-1.500-3H9z" fill="#111" stroke="#fff" strokeWidth="0.600" /></svg>
  </div>
);

export default App;
